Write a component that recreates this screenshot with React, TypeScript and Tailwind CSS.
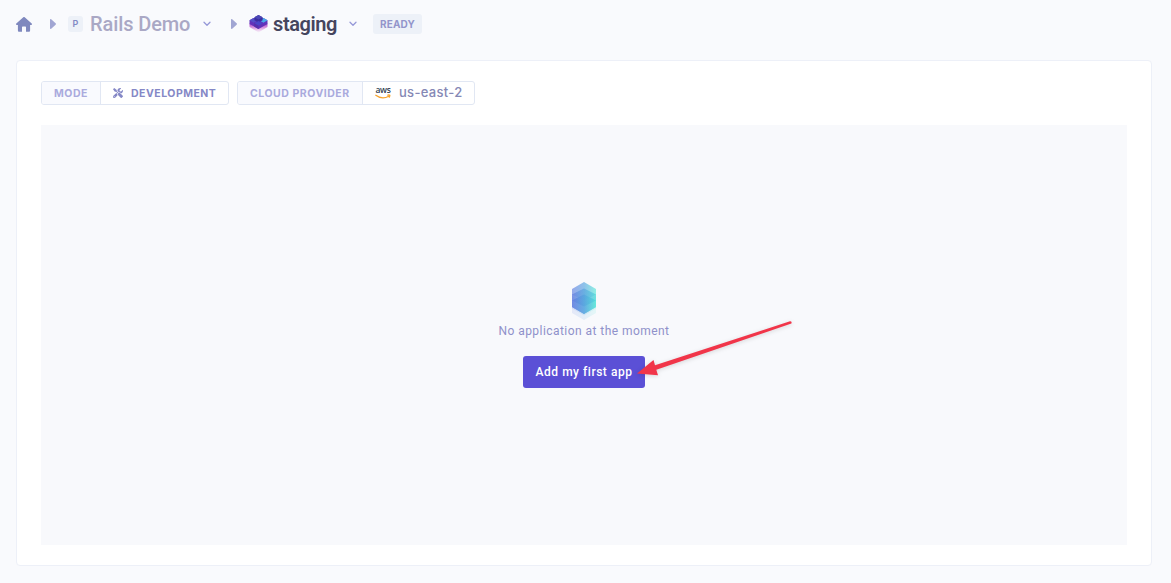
import React from 'react';
import { FaTools } from 'react-icons/fa';

const Caret = () => (
  <svg className="h-[10px] w-[6px] shrink-0" viewBox="0 0 6 10" fill="#a1a6d3">
    <path d="M0 .8C0 0 .7-.2 1.2.3l4.4 4c.5.4.5 1 0 1.4l-4.4 4C.7 10.200 0 10 0 9.200Z" />
  </svg>
);

const Chevron = () => (
  <svg className="h-[6px] w-[8px] shrink-0" viewBox="0 0 8 6" fill="none" stroke="#9698d8" strokeWidth="1.3" strokeLinecap="round" strokeLinejoin="round">
    <path d="M1 1.300 4 4.300 7 1.300" />
  </svg>
);

const Home = () => (
  <svg className="h-[15px] w-4 shrink-0" viewBox="0 0 16 15" fill="#7f88be">
    <path d="M7.300.3a1 1 0 0 1 1.400 0l7 6.300c.7.7.3 1.400-.6 1.400h-1v5.300c0 1-.5 1.500-1.400 1.500H10V10.500c0-.7-.3-1-1-1H7c-.7 0-1 .3-1 1v4.300H3.300c-.9 0-1.400-.5-1.400-1.500V8h-1C0 8-.4 7.300.3 6.600Z" />
  </svg>
);

const ClusterIcon = () => (
  <svg className="h-[18px] w-[19px] shrink-0" viewBox="0 0 19 18">
    <defs>
      <linearGradient id="fade" x1="0" y1="0" x2="0" y2="1">
        <stop stopColor="#a13cc4" />
        <stop offset=".5" stopColor="#d07fd6" stopOpacity=".75" />
        <stop offset="1" stopColor="#e9b5e6" stopOpacity=".1" />
      </linearGradient>
    </defs>
    <path d="m.5 8.500 9 3.500 9-3.500V12l-9 5.500-9-5.500Z" fill="url(#fade)" />
    <path d="m.5 5.300 4-2.300H14.500l4 2.300V9l-9 5-9-5Z" fill="#6232b9" />
    <path d="m.5 5.300 4-2.300 4.300 2.300-4.300 2.400Z" fill="#5450c8" />
    <path d="m10.200 5.300 4.300-2.300 4 2.300-4 2.400Z" fill="#4aa8ea" />
    <path d="m5.400 2.300 4.100-2.200 4.100 2.200v3L9.500 7.500 5.400 5.300Z" fill="#3c2ea1" />
    <path d="m5.400 2.300 4.100-2.200 4.100 2.200-4.100 2.200Z" fill="#4b47b6" />
    <path d="m5.200 8.200 4.300-2.300 4.300 2.300-4.300 2.500Z" fill="#4a46c8" />
    <path d="m5.200 8.200 4.300 2.500V14L5.200 11.600Z" fill="#5630aa" />
  </svg>
);

const Stack = () => (
  <svg className="h-[40px] w-[26px]" viewBox="0 0 26 40">
    <defs>
      <linearGradient id="sea" x1="0" y1="0" x2="1" y2="0">
        <stop stopColor="#6c86e2" />
        <stop offset=".5" stopColor="#60a9e2" />
        <stop offset="1" stopColor="#62ebd9" />
      </linearGradient>
      <linearGradient id="blue" x1="0" y1="0" x2="1" y2="0">
        <stop stopColor="#5f76de" />
        <stop offset="1" stopColor="#45cfda" />
      </linearGradient>
    </defs>
    <path d="m1 15 12 7 12-7v17l-12 7-12-7Z" fill="url(#sea)" opacity=".14" />
    <path d="m1 13 12 7 12-7v14.500l-12 7-12-7Z" fill="url(#sea)" opacity=".14" />
    <path d="m13 1 12 7v18l-12 7-12-7V8Z" fill="url(#sea)" opacity=".7" />
    <path d="m1 13.500 12-6 12 6V26l-12 7-12-7Z" fill="url(#blue)" opacity=".35" />
    <path d="m1 13.500 12-6 12 6-12 6Z" fill="url(#blue)" opacity=".4" />
    <path d="m1 19.500 12-6 12 6v6.500l-12 7-12-7Z" fill="url(#sea)" opacity=".65" />
    <path d="m1 19.500 12-6 12 6-12 6Z" fill="url(#blue)" opacity=".55" />
  </svg>
);

const Aws = () => (
  <span className="flex h-[14px] w-4 flex-col items-center">
    <span className="h-[8px] font-['Open_Sans',sans-serif] text-[8.500px] font-semibold leading-[8px] tracking-[-0.3px] text-[#303d50]">aws</span>
    <svg className="h-[5px] w-4 shrink-0" viewBox="0 0 16 5" fill="none" stroke="#f6a32c" strokeWidth="1.300" strokeLinecap="round">
      <path d="M.8 1.300c4 3 9 3.200 13 1M12.800 1.100c2-.4 2.600 0 1.500 2" />
    </svg>
  </span>
);

export default function App() {
  return (
    <main className="flex h-[583px] w-full flex-col bg-[#f9fafd] px-4 font-['Inter',sans-serif]">
      <header className="flex h-[60px] shrink-0 items-start pt-[11px]">
        <nav className="flex h-[26px] items-center">
          <Home />
          <span className="ml-[18px] flex"><Caret /></span>
          <span className="ml-[12px] flex h-4 w-[15px] items-center justify-center rounded-[3px] bg-[#edf1f8] text-[9px] font-semibold text-[#8289c5]">P</span>
          <span className="ml-[7px] w-[100px] whitespace-nowrap font-['Roboto',sans-serif] text-[20px] font-medium leading-[26px] tracking-[-0.1px] text-[#aaa8c5]">Rails Demo</span>
          <span className="ml-[13px] flex"><Chevron /></span>
          <span className="ml-[20px] flex"><Caret /></span>
          <span className="ml-[12px] flex"><ClusterIcon /></span>
          <span className="ml-[5px] w-[65px] whitespace-nowrap font-['Roboto',sans-serif] text-[20px] font-semibold leading-[26px] tracking-[-0.4px] text-[#45455e]">staging</span>
          <span className="ml-[11px] flex"><Chevron /></span>
          <span className="ml-[16px] flex h-5 w-[49px] items-center justify-center rounded-[3px] bg-[#edf1f8] text-[10px] font-bold tracking-[0.15px] text-[#9395cb]">READY</span>
        </nav>
      </header>

      <section className="mr-[3px] flex h-[506px] shrink-0 flex-col rounded-[4px] border border-[#edf0f8] bg-white px-6 pt-5">
        <div className="flex h-6 shrink-0 gap-2 text-[10.500px] font-bold">
          <div className="flex w-[188px] overflow-hidden rounded-[3px] border border-[#e1e7f3]">
            <span className="flex w-[59px] items-center border-r border-[#e1e7f3] bg-[#f9fafe] pl-3 pt-px tracking-[0.55px] text-[#aaaadd]">MODE</span>
            <span className="flex items-center pl-[12px] text-[#8588c6]">
              <FaTools className="size-[10px]" />
              <span className="ml-[8px] pt-px tracking-[0.5px]">DEVELOPMENT</span>
            </span>
          </div>
          <div className="flex w-[238px] overflow-hidden rounded-[3px] border border-[#e1e7f3]">
            <span className="flex w-[125px] items-center border-r border-[#e1e7f3] bg-[#f9fafe] pl-3 pt-px tracking-[0.53px] text-[#aaaadd]">CLOUD PROVIDER</span>
            <span className="flex items-center pl-[12px]">
              <Aws />
              <span className="ml-[8px] whitespace-nowrap pb-[2px] text-[13px] font-medium leading-[20px] tracking-[0.3px] text-[#8588b5]">us-east-2</span>
            </span>
          </div>
        </div>

        <div className="relative mt-5 flex h-[420px] flex-col items-center bg-[#f8f9fc] pt-[156px] font-['Roboto',sans-serif]">
          <Stack />
          <p className="h-5 whitespace-nowrap text-[12px] leading-[20px] tracking-[0.45px] text-[#8f91ca]">No application at the moment</p>
          <button className="mt-[15px] h-8 w-[122px] rounded-[3px] bg-[#5b50d6] text-[12px] font-medium tracking-[0.53px] text-white">Add my first app</button>
          <svg className="absolute left-[590px] top-[190px] h-[70px] w-[170px]" viewBox="0 0 170 70" fill="#f13549">
            <path className="drop-shadow-sm" d="m6 58.500 16.500-13.500 1.500 5.200 135-43.900q2.200 0 1.400 2.200L25.300 54.700l1.700 5.500Z" />
          </svg>
        </div>
      </section>
    </main>
  );
}
